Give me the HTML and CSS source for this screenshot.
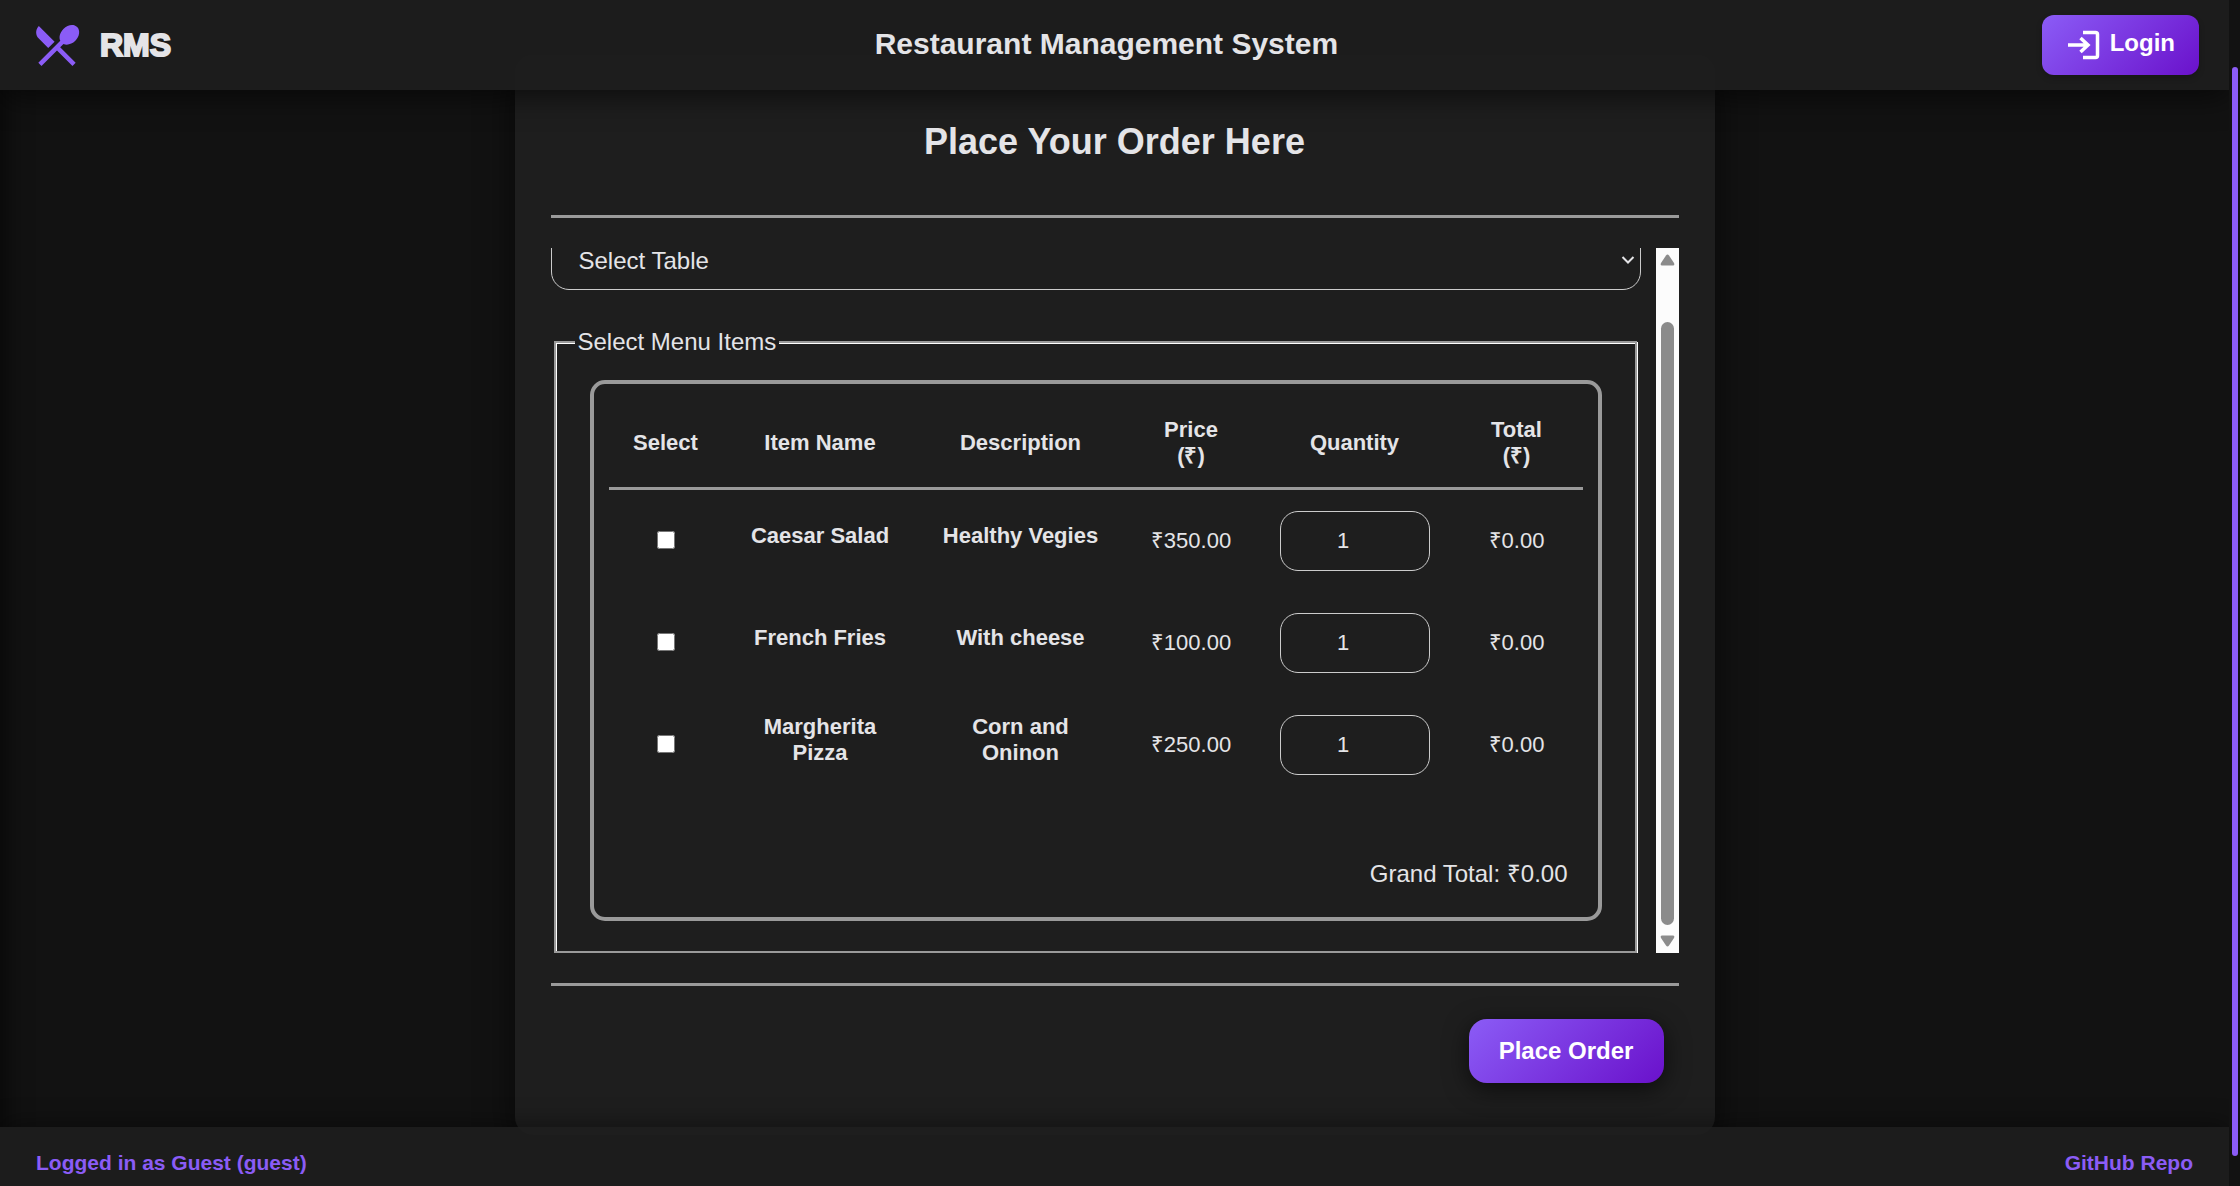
FILE: index.html
```html
<!DOCTYPE html>
<html lang="en">
<head>
<meta charset="utf-8">
<meta name="viewport" content="width=device-width, initial-scale=1">
<title>Restaurant Management System</title>
<link rel="stylesheet" href="styles.css">
</head>
<body>
<div class="app">
  <header class="topbar">
    <a class="brand" href="#">
      <svg class="brand-icon" viewBox="0 0 24 24" aria-hidden="true"><path d="m8.1 13.34 2.83-2.83L3.91 3.5c-1.56 1.56-1.56 4.09 0 5.66l4.19 4.18zm6.78-1.81c1.53.71 3.68.21 5.27-1.38 1.91-1.91 2.28-4.65.81-6.12-1.46-1.46-4.2-1.1-6.12.81-1.59 1.59-2.09 3.74-1.38 5.27L3.7 19.87l1.41 1.41L12 14.41l6.88 6.88 1.41-1.41L13.41 13l1.47-1.47z"/></svg>
      <span class="brand-name">RMS</span>
    </a>
    <h1 class="app-title">Restaurant Management System</h1>
    <button class="btn btn-login" type="button">
      <svg class="login-icon" viewBox="0 0 36 36" aria-hidden="true"><path d="M17 5.500h12.500a2 2 0 0 1 2 2v21a2 2 0 0 1-2 2H17M2 18h20M14.500 11l7.500 7-7.500 7" fill="none" stroke="currentColor" stroke-width="3.500"/></svg>
      <span>Login</span>
    </button>
  </header>

  <main class="main">
    <form class="card">
      <h2 class="card-title">Place Your Order Here</h2>
      <hr class="rule">
      <div class="scroller">
        <div class="scroller-content">
          <div class="select-field">
            <select class="table-select" aria-label="Select Table">
              <option>Select Table</option>
            </select>
            <svg class="chevron" viewBox="0 0 14 10" aria-hidden="true"><path d="M1.500 2 7 7.500 12.500 2" fill="none" stroke="currentColor" stroke-width="2"/></svg>
          </div>
          <fieldset class="menu">
            <legend>Select Menu Items</legend>
            <div class="menu-box">
              <table class="items">
                <colgroup>
                  <col class="col-select"><col class="col-name"><col class="col-desc"><col class="col-price"><col class="col-qty"><col class="col-total">
                </colgroup>
                <thead>
                  <tr><th>Select</th><th>Item Name</th><th>Description</th><th>Price<br>(₹)</th><th>Quantity</th><th>Total<br>(₹)</th></tr>
                </thead>
                <tbody>
                  <tr>
                    <td class="pick"><input class="check" type="checkbox" aria-label="Caesar Salad"></td>
                    <td class="strong">Caesar Salad</td>
                    <td class="strong">Healthy Vegies</td>
                    <td>₹350.00</td>
                    <td><input class="qty" type="number" value="1" min="1" aria-label="Quantity of Caesar Salad"></td>
                    <td>₹0.00</td>
                  </tr>
                  <tr>
                    <td class="pick"><input class="check" type="checkbox" aria-label="French Fries"></td>
                    <td class="strong">French Fries</td>
                    <td class="strong">With cheese</td>
                    <td>₹100.00</td>
                    <td><input class="qty" type="number" value="1" min="1" aria-label="Quantity of French Fries"></td>
                    <td>₹0.00</td>
                  </tr>
                  <tr>
                    <td class="pick"><input class="check" type="checkbox" aria-label="Margherita Pizza"></td>
                    <td class="strong">Margherita Pizza</td>
                    <td class="strong">Corn and Oninon</td>
                    <td>₹250.00</td>
                    <td><input class="qty" type="number" value="1" min="1" aria-label="Quantity of Margherita Pizza"></td>
                    <td>₹0.00</td>
                  </tr>
                </tbody>
              </table>
              <p class="grand-total">Grand Total: ₹0.00</p>
            </div>
          </fieldset>
        </div>
        <div class="scrollbar" aria-hidden="true">
          <svg class="arrow" viewBox="0 0 23 24"><path d="M10 7.500q1.500-2 3 0l5 7.500q1 2.500-1 2.500H6q-2 0-1-2.500z"/></svg>
          <div class="scrollbar-gap"></div>
          <div class="scrollbar-thumb"></div>
          <svg class="arrow" viewBox="0 0 23 24"><path d="M10 16.500q1.500 2 3 0l5-7.500q1-2.500-1-2.500H6q-2 0-1 2.500z"/></svg>
        </div>
      </div>
      <hr class="rule">
      <div class="actions">
        <button class="btn btn-order" type="button">Place Order</button>
      </div>
    </form>
  </main>

  <footer class="footer">
    <span>Logged in as Guest (guest)</span>
    <a href="#">GitHub Repo</a>
  </footer>
</div>
<div class="page-scroll" aria-hidden="true"><div class="page-thumb"></div></div>
</body>
</html>
```
FILE: styles.css
```css
:root {
  --surface: #1e1e1e;
  --text: #e4e4e7;
  --line: #9a9a9a;
  --accent: #8b5cf6;
}

* { box-sizing: border-box; }

body {
  margin: 0;
  height: 100vh;
  display: flex;
  overflow: hidden;
  background: #121212;
  color: var(--text);
  font-family: "Liberation Sans", Arial, sans-serif;
  font-size: 24px;
}

button, input, select { font: inherit; color: inherit; }

.app {
  position: relative;
  flex: 1;
  height: 100vh;
  display: flex;
  flex-direction: column;
  overflow: hidden;
}

.app::before {
  content: "";
  position: absolute;
  top: 0;
  bottom: 0;
  left: -30px;
  width: 30px;
  box-shadow: 0 0 30px rgba(0, 0, 0, 0.8);
}

.topbar {
  position: relative;
  z-index: 2;
  flex: none;
  height: 90px;
  padding: 0 30px;
  display: flex;
  align-items: center;
  justify-content: space-between;
  background: rgba(30, 30, 30, 0.95);
  box-shadow: 0 6px 30px rgba(0, 0, 0, 0.6);
}

.brand {
  display: flex;
  align-items: center;
  gap: 16px;
  color: inherit;
  text-decoration: none;
}

.brand-icon { width: 54px; height: 54px; fill: var(--accent); }

.brand-name {
  font-size: 32px;
  font-weight: 900;
  -webkit-text-stroke: 2px currentColor;
}

.app-title { margin: 0; padding-bottom: 2px; font-size: 30px; line-height: 36px; }

.btn {
  border: 0;
  color: #fff;
  font-weight: 700;
  background: linear-gradient(135deg, #8b5cf6, #6a11cb);
}

.btn-login {
  display: flex;
  align-items: center;
  gap: 8px;
  height: 60px;
  padding: 0 24px;
  border-radius: 12px;
  box-shadow: 0 3px 6px rgba(0, 0, 0, 0.2);
}

.login-icon { width: 36px; height: 36px; }

.btn-login span { padding-bottom: 4px; }

.main {
  flex: 1;
  min-height: 0;
  margin: -35px 0 -8px;
  display: flex;
  justify-content: center;
}

.card {
  width: 1200px;
  max-width: 100%;
  padding: 63px 36px 52px;
  display: flex;
  flex-direction: column;
  border-radius: 18px;
  background: var(--surface);
  box-shadow: 0 12px 36px rgba(0, 0, 0, 0.6);
}

.card-title {
  margin: 0 0 49px;
  text-align: center;
  font-size: 36px;
  line-height: 48px;
}

.rule {
  flex: none;
  width: 100%;
  height: 3px;
  margin: 0;
  border: 0;
  background: var(--line);
}

/* list area, scrolled to its end */
.scroller {
  flex: 1;
  min-height: 0;
  margin: 30px 0;
  display: flex;
  gap: 15px;
  overflow: hidden;
}

.scroller-content {
  flex: 1;
  display: flex;
  flex-direction: column;
  justify-content: flex-end;
}

.select-field {
  flex: none;
  display: grid;
  align-items: center;
  margin-bottom: 38px;
}

.table-select, .chevron { grid-area: 1 / 1; }

.table-select {
  width: 100%;
  height: 60px;
  padding: 0 27px;
  border: 1px solid #ccc;
  border-radius: 18px;
  background: var(--surface);
  appearance: none;
}

.chevron {
  width: 14px;
  height: 10px;
  margin-right: 6px;
  justify-self: end;
  pointer-events: none;
}

/* engraved frame: grey band with a white highlight on its lower right side */
.menu {
  flex: none;
  min-width: 0;
  margin: 0 4px 0 3px;
  padding: 10px 18px 15px 19px;
  border: 2px solid var(--line);
  box-shadow: inset 1px 1px 0 #fff, 1px 1px 0 #fff;
}

.menu legend { padding: 0 3px; line-height: 27px; background: var(--surface); }

.menu-box {
  margin: 15px;
  padding: 15px;
  border: 4px solid var(--line);
  border-radius: 15px;
}

.items {
  width: 100%;
  table-layout: fixed;
  border-spacing: 0;
  text-align: center;
  font-size: 22px;
  line-height: 26px;
}

.col-select { width: 114px; }
.col-name { width: 195px; }
.col-desc { width: 206px; }
.col-price { width: 135px; }
.col-qty { width: 192px; }
.col-total { width: 132px; }

.items th { padding: 18px 15px; border-bottom: 3px solid var(--line); }

.items td { height: 102px; padding: 0 15px; }

.items .strong { padding-bottom: 10px; font-weight: 700; }

.items .pick { padding-bottom: 4px; }

.check { width: 18px; height: 18px; margin: 0; vertical-align: middle; }

.qty {
  display: block;
  width: 150px;
  height: 60px;
  margin: 0 auto;
  padding: 0 24px 0 0;
  border: 1px solid #ccc;
  border-radius: 18px;
  background: transparent;
  text-align: center;
  appearance: textfield;
}

.qty { padding-right: 8px; }

.grand-total { margin: 0; padding: 63px 15px 13px; text-align: right; line-height: 30px; }

.scrollbar {
  flex: none;
  width: 23px;
  display: flex;
  flex-direction: column;
  align-items: center;
  background: #fcfcfc;
}

.arrow { flex: none; width: 23px; height: 24px; fill: #8b8b8b; }

.scrollbar-gap { flex: 50; }

.scrollbar-thumb { flex: 603; width: 13px; margin-bottom: 4px; border-radius: 7px; background: #8b8b8b; }

.actions { display: flex; justify-content: flex-end; padding: 33px 15px 0; }

.btn-order {
  width: 195px;
  height: 64px;
  padding: 0;
  border-radius: 18px;
  box-shadow: 0 6px 24px rgba(0, 0, 0, 0.6);
}

.footer {
  position: relative;
  z-index: 2;
  flex: none;
  height: 59px;
  padding: 12px 36px 0;
  display: flex;
  justify-content: space-between;
  font-size: 21px;
  font-weight: 700;
  line-height: 48px;
  color: var(--accent);
  background: rgba(30, 30, 30, 0.9);
  box-shadow: 0 -3px 24px rgba(0, 0, 0, 0.4);
}

.footer a { color: inherit; text-decoration: none; }

.page-scroll { flex: none; width: 11px; padding: 67px 2px 30px 3px; }

.page-thumb { height: 100%; border-radius: 3px; background: var(--accent); }
```
